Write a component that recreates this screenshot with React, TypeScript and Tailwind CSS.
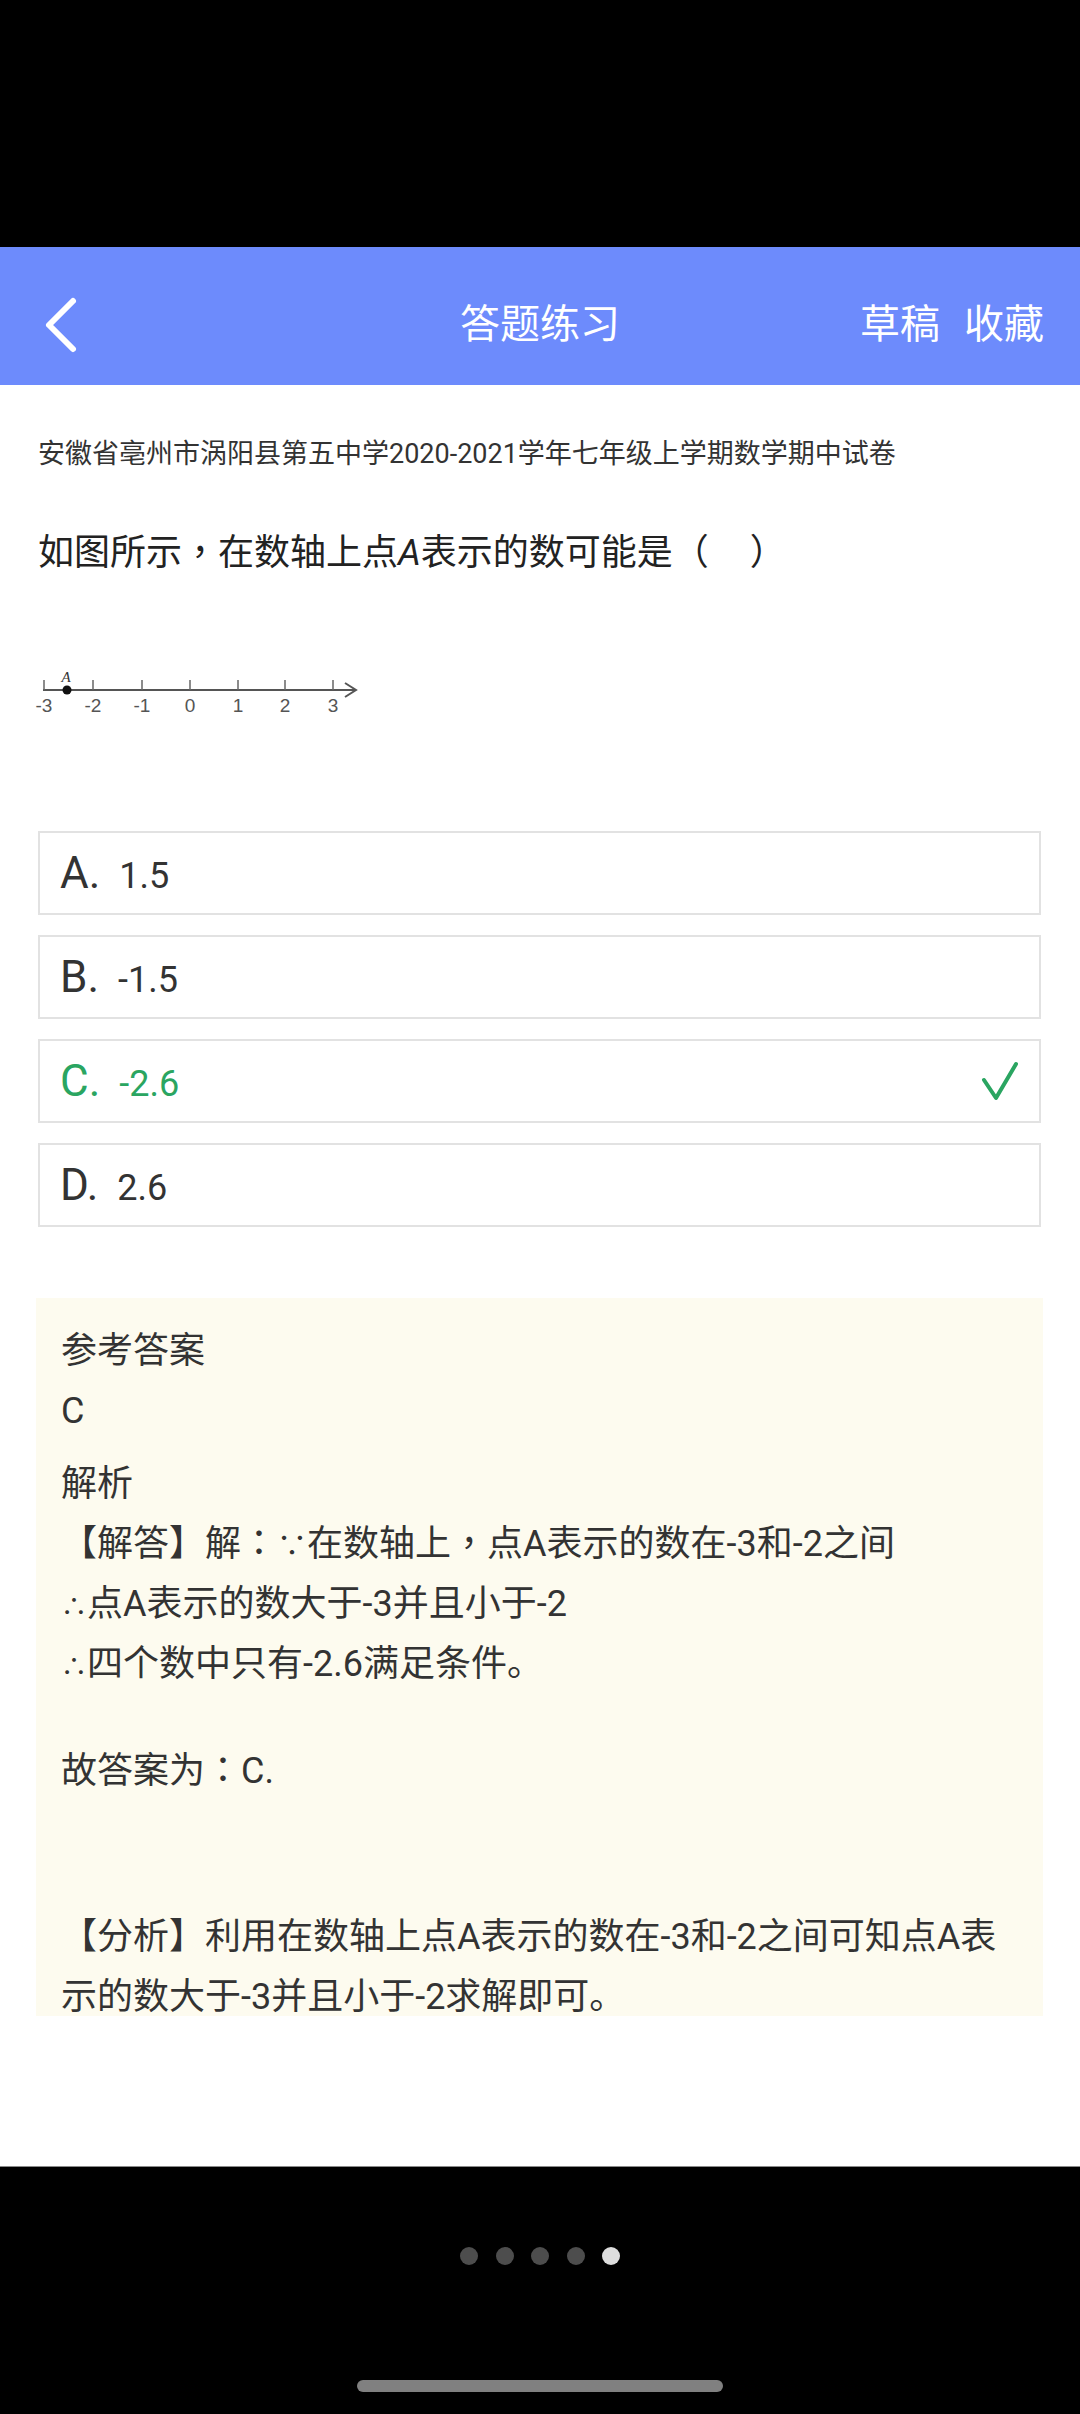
function P({ c }: { c: string }) {
  return <span className="font-['Noto_Sans_CJK_TC',sans-serif] leading-none">{c}</span>;
}

function Sym({ c, size }: { c: string; size: "s" | "m" }) {
  return (
    <span className={(size === "s" ? "text-[26px]" : "text-[30px]") + " leading-none"}>{c}</span>
  );
}

export default function App() {
  const options = [
    { k: "A.", v: "1.5", correct: false },
    { k: "B.", v: "-1.5", correct: false },
    { k: "C.", v: "-2.6", correct: true },
    { k: "D.", v: "2.6", correct: false },
  ];
  const ticks = [
    { x: 44, l: "-3" },
    { x: 93, l: "-2" },
    { x: 142, l: "-1" },
    { x: 190, l: "0" },
    { x: 238, l: "1" },
    { x: 285, l: "2" },
    { x: 333, l: "3" },
  ];
  return (
    <div className="w-[1080px] h-[2414px] flex flex-col bg-white overflow-hidden font-['Roboto','Noto_Sans_CJK_SC',sans-serif]">
      <div className="h-[247px] shrink-0 bg-black" />
      <header className="h-[138px] shrink-0 bg-[#6d8bfc] grid grid-cols-[1fr_auto_1fr] items-center pt-[18px] text-white">
        <div className="pl-[44px] flex items-center">
          <svg width="34" height="58" viewBox="0 0 34 58">
            <polyline
              points="29,5 5,29 29,53"
              fill="none"
              stroke="#ffffff"
              strokeWidth="6"
              strokeLinecap="round"
              strokeLinejoin="round"
            />
          </svg>
        </div>
        <div className="text-[40px] leading-[56px]">答题练习</div>
        <div className="flex justify-end gap-[24px] pr-[36px] text-[40px] leading-[56px]">
          <span>草稿</span>
          <span>收藏</span>
        </div>
      </header>

      <main className="flex-1 flex flex-col">
        <p className="mt-[49px] ml-[38px] h-[40px] text-[27px] leading-[40px] text-[#333333] whitespace-nowrap">
          安徽省亳州市涡阳县第五中学2020-2021学年七年级上学期数学期中试卷
        </p>
        <p className="mt-[54px] ml-[38px] h-[50px] text-[36px] leading-[50px] text-[#222222] whitespace-nowrap">
          如图所示<P c="，" />在数轴上点<i>A</i>表示的数可能是（<span className="inline-block w-[41px]" />）
        </p>

        <svg className="mt-[82px] block" width="380" height="60" viewBox="0 0 380 60">
          <line x1="43" y1="30" x2="355" y2="30" stroke="#555555" strokeWidth="2" />
          <polyline points="345,23 356,30 345,37" fill="none" stroke="#555555" strokeWidth="2" />
          {ticks.map((t) => (
            <line key={t.l} x1={t.x} y1="20" x2={t.x} y2="30" stroke="#666666" strokeWidth="1.5" />
          ))}
          {ticks.map((t) => (
            <text
              key={"l" + t.l}
              x={t.x}
              y="52"
              textAnchor="middle"
              fontSize="19"
              fill="#555555"
              fontFamily="'Liberation Sans', Arial, sans-serif"
            >
              {t.l}
            </text>
          ))}
          <circle cx="67" cy="30" r="4.5" fill="#111111" />
          <text
            x="66"
            y="22"
            textAnchor="middle"
            fontSize="15"
            fontStyle="italic"
            fill="#333333"
            fontFamily="'Liberation Serif', serif"
          >
            A
          </text>
        </svg>

        <div className="mt-[111px] ml-[38px] mr-[39px] flex flex-col gap-[20px]">
          {options.map((o) => (
            <div
              key={o.k}
              className={
                "h-[84px] border-2 border-[#e2e2e2] flex items-center pl-[20px] pr-[20px] " +
                (o.correct ? "text-[#2aa561]" : "text-[#333333]")
              }
            >
              <div className="flex items-baseline">
                <span className="text-[44px] leading-none">{o.k}</span>
                <span className="ml-[19px] text-[36px] leading-none">{o.v}</span>
              </div>
              {o.correct && (
                <svg className="ml-auto" width="38" height="40" viewBox="0 0 38 40">
                  <polyline
                    points="3,19 15,37 35,3"
                    fill="none"
                    stroke="#2aa561"
                    strokeWidth="4"
                    strokeLinecap="round"
                    strokeLinejoin="round"
                  />
                </svg>
              )}
            </div>
          ))}
        </div>

        <div className="mt-[71px] ml-[36px] mr-[37px] h-[718px] bg-[#fdfbef] pl-[25px] pr-[20px] pt-[23px] text-[36px] leading-[60px] text-[#333333]">
          <p className="h-[60px]">参考答案</p>
          <p className="h-[60px]">C</p>
          <p className="mt-[13px] h-[60px]">解析</p>
          <p className="h-[60px] whitespace-nowrap">
            【解答】解<P c="：" />
            <Sym c="∵" size="m" />在数轴上<P c="，" />点A表示的数在-3和-2之间
          </p>
          <p className="h-[60px] whitespace-nowrap">
            <Sym c="∴" size="s" />点A表示的数大于-3并且小于-2
          </p>
          <p className="h-[60px] whitespace-nowrap">
            <Sym c="∴" size="s" />四个数中只有-2.6满足条件。
          </p>
          <p className="mt-[47px] h-[60px]">
            故答案为<P c="：" />C.
          </p>
          <p className="mt-[106px] h-[60px] whitespace-nowrap">
            【分析】利用在数轴上点A表示的数在-3和-2之间可知点A表
          </p>
          <p className="h-[60px] whitespace-nowrap">示的数大于-3并且小于-2求解即可。</p>
        </div>
      </main>

      <div className="h-[248px] shrink-0 bg-black border-t border-[#8a8a8a] flex flex-col items-center">
        <div className="mt-[80px] flex gap-[17.5px]">
          <div className="w-[18px] h-[18px] rounded-full bg-[#4d4d4d]" />
          <div className="w-[18px] h-[18px] rounded-full bg-[#4d4d4d]" />
          <div className="w-[18px] h-[18px] rounded-full bg-[#4d4d4d]" />
          <div className="w-[18px] h-[18px] rounded-full bg-[#4d4d4d]" />
          <div className="w-[18px] h-[18px] rounded-full bg-[#dddddd]" />
        </div>
        <div className="mt-[115px] w-[366px] h-[12px] rounded-full bg-[#808080]" />
      </div>
    </div>
  );
}
